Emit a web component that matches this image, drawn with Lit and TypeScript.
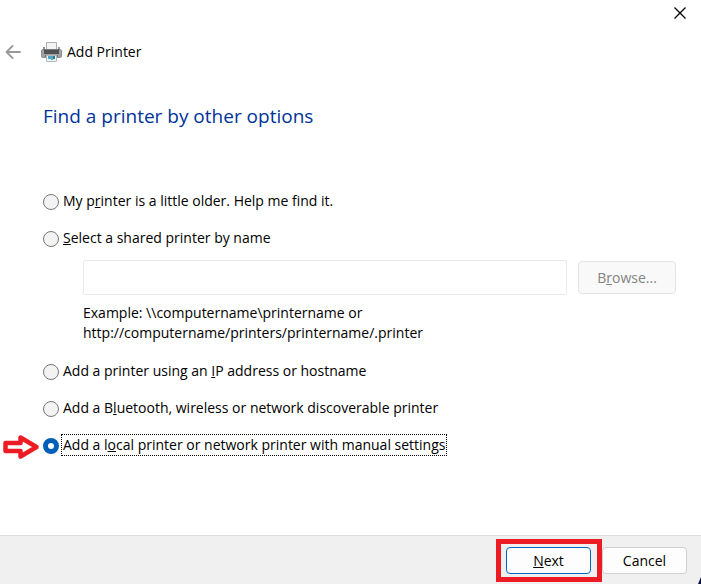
import { LitElement, html, css } from "lit";
import { customElement, state } from "lit/decorators.js";

@customElement("app-root")
export class AppRoot extends LitElement {
  @state() private choice = "local";

  static styles = css`
    :host {
      display: flex;
      flex-direction: column;
      min-height: 100vh;
      background: #fff;
      color: #000;
      font: 14px/20px "Open Sans", "Noto Sans", sans-serif;
    }
    * { box-sizing: border-box; }
    button { font: inherit; color: inherit; padding: 0; }
    .caption { display: flex; justify-content: flex-end; height: 36px; }
    .icon { border: 0; background: none; display: grid; place-items: center; }
    .close { width: 42px; height: 26px; }
    .head { display: flex; align-items: center; height: 32px; }
    .back { width: 26px; height: 30px; }
    .printer { margin: 0 5px 0 15px; }
    .title { font: inherit; margin: 0; }
    main { flex: 1; padding: 34px 25px 24px 43px; }
    h2 { margin: 0 0 60px; font-size: 19px; line-height: 28px; font-weight: 400; color: #003399; }
    fieldset { border: 0; margin: 0; padding: 0; min-width: 0; display: grid; gap: 15px; }
    .group { display: grid; gap: 11px; }
    .option { display: flex; align-items: center; height: 22px; position: relative; }
    .option label { padding: 0 1px; margin-left: 3px; line-height: 20px; white-space: nowrap; }
    .option input { appearance: none; flex: none; width: 16px; height: 16px; margin: 2px 0 0; border: 1px solid #777; border-radius: 50%; background: #f3f3f3; }
    .option input:checked { border: 5px solid #005fb8; background: #fff; }
    .option input:checked + label { outline: 1px dotted #000; }
    .shared { margin: 0 0 2px 40px; }
    .row { display: flex; align-items: center; gap: 11px; margin-bottom: 8px; }
    .row input { flex: 1; min-width: 0; height: 35px; border: 1px solid #e9e9e9; border-radius: 2px; background: #fff; }
    .browse { width: 98px; height: 33px; border: 1px solid #e5e5e5; border-radius: 4px; background: #f9f9f9; color: #838383; }
    p { margin: 0; }
    footer { position: relative; display: flex; justify-content: flex-end; gap: 11px; padding: 11px 14px 10px; background: #f0f0f0; border-top: 1px solid #dfdfdf; }
    footer::after { content: ""; position: absolute; right: 0; bottom: 0; width: 3px; height: 7px; background: #0c1445; clip-path: polygon(100% 0, 100% 100%, 0 100%); }
    footer button { width: 85px; height: 27px; border: 1px solid #d0d0d0; border-radius: 4px; background: #fdfdfd; }
    .marked { position: relative; display: flex; }
    .marked button { border-color: #0067c0; }
    .frame { position: absolute; inset: -8px -11px -8px -10px; border: 5px solid #ed1c24; pointer-events: none; }
    .pointer { position: absolute; left: -41px; top: 0; }
    svg { display: block; flex: none; }
  `;

  private option(id: string, text: unknown, extra: unknown = "") {
    return html`<div class="option">
      ${extra}
      <input type="radio" name="method" id=${id} .checked=${this.choice === id} @change=${() => (this.choice = id)} />
      <label for=${id}>${text}</label>
    </div>`;
  }

  render() {
    const pointer = html`<svg class="pointer" width="38" height="26" viewBox="0 0 38 26" aria-hidden="true">
      <path d="M3.5 9H18.5V3.5L34.5 13L18.5 22.5V17H3.5Z" fill="#fff" stroke="#ed1c24" stroke-width="4.5" stroke-linejoin="round" />
    </svg>`;
    return html`
      <div class="caption">
        <button class="icon close" aria-label="Close">
          <svg width="14" height="14" viewBox="0 0 14 14"><path d="M1.5 1.5L12.5 12.5M12.5 1.5L1.5 12.5" stroke="#000" stroke-width="1.3" /></svg>
        </button>
      </div>
      <header class="head">
        <button class="icon back" aria-label="Back">
          <svg width="16" height="14" viewBox="0 0 16 14"><path d="M15 7H1.5M7.5 1L1.5 7L7.5 13" fill="none" stroke="#999" stroke-width="1.8" stroke-linecap="round" stroke-linejoin="round" /></svg>
        </button>
        <svg class="printer" width="21" height="20" viewBox="0 0 21 20" aria-hidden="true">
          <path d="M5.5 .5H15.5V8H5.5Z" fill="#f4f4f4" stroke="#b0b0b0" />
          <rect x="2" y="5" width="2" height="3" fill="#999" /><rect x="17" y="5" width="2" height="3" fill="#999" />
          <rect x=".5" y="7.5" width="20" height="8" rx="1.5" fill="#a0a2a4" stroke="#8b8e90" />
          <rect x="3" y="7" width="15" height="5" fill="#505254" />
          <rect x="4" y="7" width="13" height="1" fill="#77797b" />
          <path d="M4 13H17V15H4Z" fill="#707376" />
          <path d="M5.5 13.5H15.5V19.5H5.5Z" fill="#e9f3f8" stroke="#b4b8ba" />
          <rect x="7" y="14" width="3" height="3" fill="#4ba3d0" /><rect x="10" y="14" width="2" height="4" fill="#57b29c" /><rect x="12" y="14" width="2" height="3" fill="#2d70ad" />
        </svg>
        <h1 class="title">Add Printer</h1>
      </header>
      <main>
        <h2 id="heading">Find a printer by other options</h2>
        <fieldset aria-labelledby="heading">
          ${this.option("older", html`My p<u>r</u>inter is a little older. Help me find it.`)}
          <div class="group">
            ${this.option("shared", html`<u>S</u>elect a shared printer by name`)}
            <div class="shared">
              <div class="row">
                <input type="text" aria-label="Shared printer name" disabled />
                <button class="browse" disabled>B<u>r</u>owse...</button>
              </div>
              <p>Example: \\\\computername\\printername or<br />http://computername/printers/printername/.printer</p>
            </div>
          </div>
          ${this.option("ip", html`Add a printer using an <u>I</u>P address or hostname`)}
          ${this.option("bluetooth", html`Add a B<u>l</u>uetooth, wireless or network discoverable printer`)}
          ${this.option("local", html`Add a l<u>o</u>cal printer or network printer with manual settings`, pointer)}
        </fieldset>
      </main>
      <footer>
        <div class="marked"><button><u>N</u>ext</button><span class="frame"></span></div>
        <button>Cancel</button>
      </footer>
    `;
  }
}
